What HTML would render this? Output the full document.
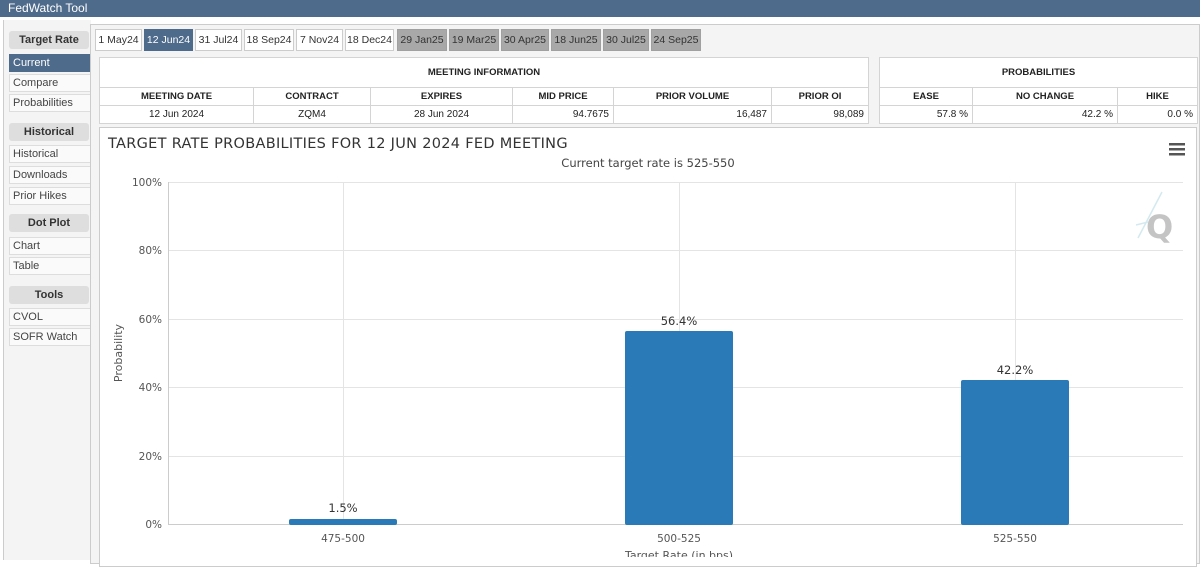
<!DOCTYPE html>
<html><head><style>
*{box-sizing:border-box;margin:0;padding:0}
body{width:1200px;height:557px;overflow:hidden;background:#fff;font-family:"Liberation Sans",Arial,sans-serif;font-size:11px;color:#222;position:relative}
.top{position:absolute;left:0;top:0;width:1200px;height:17px;background:#4f6b8b;color:#fff;font-size:12px;padding:1px 0 0 8px}
.side{position:absolute;left:3px;top:20px;width:88px;height:540px;border-left:1px solid #ccc;background:#f4f4f4}
.sh{position:absolute;left:5px;width:80px;height:18px;background:#dedede;border-radius:3px;font-weight:bold;text-align:center;line-height:18px;color:#333}
.si{position:absolute;left:5px;width:86px;height:18px;background:#fafafa;border:1px solid #ddd;line-height:16px;padding-left:3px;color:#444}
.si.on{background:#4f6b8b;color:#fff;border-color:#4f6b8b}
.main{position:absolute;left:90px;top:24px;width:1110px;height:540px;border:1px solid #ccc;background:#f4f4f4}
.tab{position:absolute;top:29px;height:22px;border:1px solid #ccc;background:#fff;line-height:20px;text-align:center;color:#333;white-space:nowrap;font-size:10.5px;overflow:hidden}
.tab.on{background:#4f6b8b;color:#fff;border-color:#4f6b8b}
.tab.g{background:#a8a8a8;color:#333;border-color:#a0a0a0}
table{position:absolute;border-collapse:collapse;background:#fff;font-size:10px}
td{border:1px solid #d4d4d4;height:18px;padding:0 4px}
.hd td{font-weight:bold;text-align:center;font-size:9.5px}
.r{text-align:right}.c{text-align:center}
.chart{position:absolute;left:99px;top:127px;width:1098px;height:440px;background:#fff;border:1px solid #ccc}
</style></head><body>
<div class="top">FedWatch Tool</div>
<div class="side">
<div class="sh" style="top:11px">Target Rate</div>
<div class="si on" style="top:34px">Current</div>
<div class="si" style="top:54px">Compare</div>
<div class="si" style="top:74px">Probabilities</div>
<div class="sh" style="top:103px">Historical</div>
<div class="si" style="top:125px">Historical</div>
<div class="si" style="top:146px">Downloads</div>
<div class="si" style="top:167px">Prior Hikes</div>
<div class="sh" style="top:194px">Dot Plot</div>
<div class="si" style="top:217px">Chart</div>
<div class="si" style="top:237px">Table</div>
<div class="sh" style="top:266px">Tools</div>
<div class="si" style="top:288px">CVOL</div>
<div class="si" style="top:308px">SOFR Watch</div>
</div>
<div class="main"></div>
<div class="tab" style="left:95px;width:47px">1 May24</div>
<div class="tab on" style="left:144px;width:49px">12 Jun24</div>
<div class="tab" style="left:195px;width:47px">31 Jul24</div>
<div class="tab" style="left:244px;width:50px">18 Sep24</div>
<div class="tab" style="left:296px;width:47px">7 Nov24</div>
<div class="tab" style="left:345px;width:49px">18 Dec24</div>
<div class="tab g" style="left:397px;width:50px">29 Jan25</div>
<div class="tab g" style="left:449px;width:50px">19 Mar25</div>
<div class="tab g" style="left:501px;width:48px">30 Apr25</div>
<div class="tab g" style="left:551px;width:50px">18 Jun25</div>
<div class="tab g" style="left:603px;width:46px">30 Jul25</div>
<div class="tab g" style="left:651px;width:50px">24 Sep25</div>

<table style="left:99px;top:57px;width:770px">
<tr class="hd"><td colspan="6" style="height:30px">MEETING INFORMATION</td></tr>
<tr class="hd"><td style="width:154px">MEETING DATE</td><td style="width:117px">CONTRACT</td><td style="width:142px">EXPIRES</td><td style="width:101px">MID PRICE</td><td style="width:158px">PRIOR VOLUME</td><td>PRIOR OI</td></tr>
<tr><td class="c">12 Jun 2024</td><td class="c">ZQM4</td><td class="c">28 Jun 2024</td><td class="r">94.7675</td><td class="r">16,487</td><td class="r">98,089</td></tr>
</table>
<table style="left:879px;top:57px;width:319px">
<tr class="hd"><td colspan="3" style="height:30px">PROBABILITIES</td></tr>
<tr class="hd"><td style="width:93px">EASE</td><td style="width:145px">NO CHANGE</td><td>HIKE</td></tr>
<tr><td class="r">57.8 %</td><td class="r">42.2 %</td><td class="r">0.0 %</td></tr>
</table>

<div class="chart"></div>
<svg style="position:absolute;left:0;top:0" width="1200" height="557" font-family="'DejaVu Sans',sans-serif">
<text x="108" y="148" font-size="14.5" fill="#333" letter-spacing="0.3">TARGET RATE PROBABILITIES FOR 12 JUN 2024 FED MEETING</text>
<text x="648" y="167" font-size="11.5" fill="#444" text-anchor="middle">Current target rate is 525-550</text>
<g fill="#555"><rect x="1169" y="143" width="16" height="2.5"/><rect x="1169" y="148" width="16" height="2.5"/><rect x="1169" y="153" width="16" height="2.5"/></g>
<g stroke="#e4e4e4" stroke-width="1">
<line x1="168" x2="1183" y1="182.5" y2="182.5"/><line x1="168" x2="1183" y1="250.5" y2="250.5"/><line x1="168" x2="1183" y1="319.5" y2="319.5"/><line x1="168" x2="1183" y1="387.5" y2="387.5"/><line x1="168" x2="1183" y1="456.5" y2="456.5"/>
<line x1="343.5" x2="343.5" y1="182" y2="524"/><line x1="679.5" x2="679.5" y1="182" y2="524"/><line x1="1015.5" x2="1015.5" y1="182" y2="524"/>
</g>
<line x1="168.5" x2="168.5" y1="182" y2="525" stroke="#ccc"/>
<line x1="168" x2="1183" y1="524.5" y2="524.5" stroke="#ccc"/>
<g font-size="10.5" fill="#555" text-anchor="end">
<text x="162" y="186">100%</text><text x="162" y="254">80%</text><text x="162" y="323">60%</text><text x="162" y="391">40%</text><text x="162" y="460">20%</text><text x="162" y="528">0%</text>
</g>
<text transform="translate(122,353) rotate(-90)" font-size="11" fill="#555" text-anchor="middle">Probability</text>
<g text-anchor="middle" font-size="10.5" fill="#555"><text x="343" y="542">475-500</text><text x="679" y="542">500-525</text><text x="1015" y="542">525-550</text></g>
<text x="679" y="559" font-size="11" fill="#555" text-anchor="middle">Target Rate (in bps)</text>
<g fill="#2a7ab8">
<rect x="289" y="519" width="108" height="6" rx="2"/>
<rect x="625" y="331" width="108" height="194" rx="2"/>
<rect x="961" y="380" width="108" height="145" rx="2"/>
</g>
<g font-size="11.5" fill="#333" text-anchor="middle"><text x="343" y="512">1.5%</text><text x="679" y="325">56.4%</text><text x="1015" y="374">42.2%</text></g>
<text x="1146" y="238" font-size="32" font-weight="bold" fill="#c4c4c4">Q</text>
<g stroke="#d3e9f0" stroke-width="1.5"><line x1="1138" y1="238" x2="1162" y2="192"/><line x1="1136" y1="225" x2="1148" y2="222"/></g>
</svg>
</body></html>
